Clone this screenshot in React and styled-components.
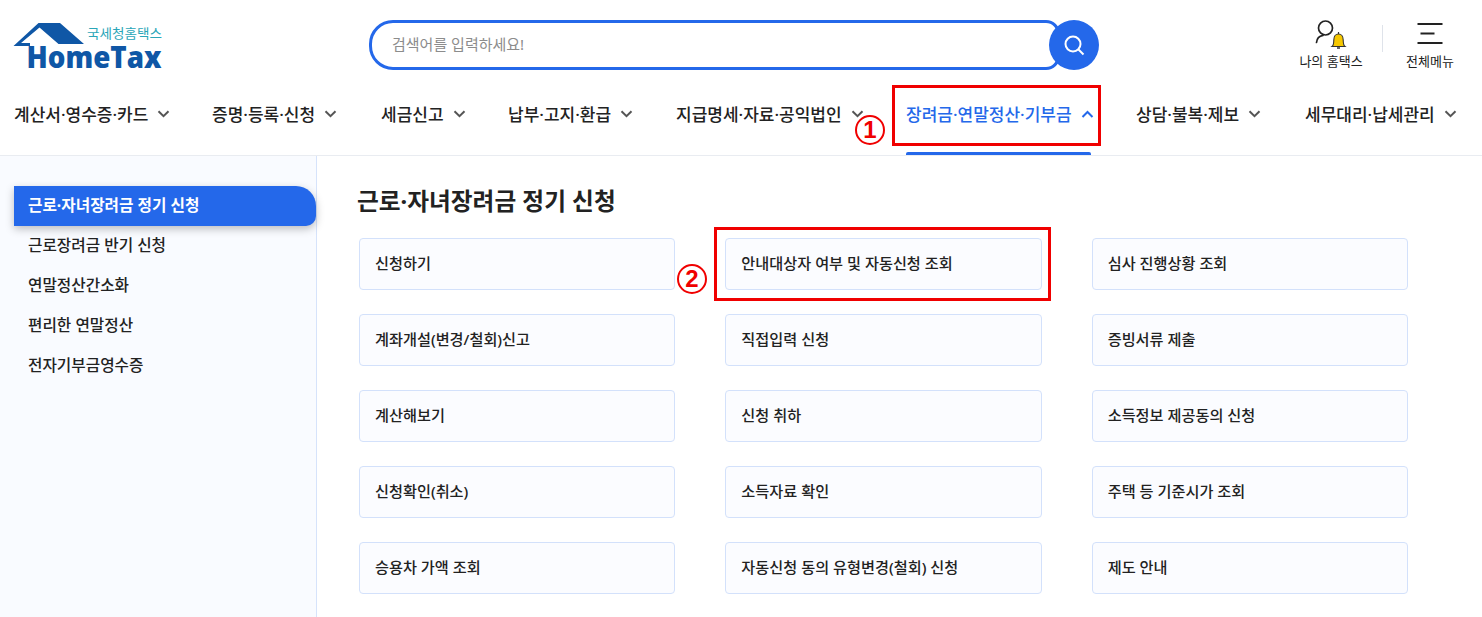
import React from "react";
import styled, { createGlobalStyle } from "styled-components";

const Global = createGlobalStyle`
  html, body { margin: 0; padding: 0; background: #fff; }
  body { font-family: "Noto Sans", "Noto Sans CJK KR", sans-serif; color: #222; }
  * { box-sizing: border-box; }
`;
const Page = styled.div`
  position: relative;
  width: 1482px;
  height: 617px;
  overflow: hidden;
`;
const Header = styled.header`
  height: 156px;
  border-bottom: 1px solid #e9ecf1;
`;
const TopBar = styled.div`
  display: flex;
  align-items: flex-start;
  height: 92px;
  padding: 20px 0 0 14px;
`;
const LogoBox = styled.svg`
  width: 150px;
  height: 52px;
  flex: none;
  overflow: visible;
`;
const SearchWrap = styled.div`
  display: flex;
  margin-left: 205px;
  width: 730px;
  height: 50px;
  flex: none;
`;
const SearchBox = styled.div`
  width: 691px;
  height: 50px;
  border: 3px solid #2468ea;
  border-radius: 24px 14px 14px 24px;
  padding: 0 0 3px 20px;
  display: flex;
  align-items: center;
  font-size: 15px;
  color: #8c8c8c;
`;
const SearchBtn = styled.div`
  width: 50px;
  height: 50px;
  margin-left: -11px;
  border-radius: 50%;
  background: #2468ea;
  display: flex;
  align-items: center;
  justify-content: center;
  flex: none;
`;
const Utils = styled.div`
  display: flex;
  align-items: flex-start;
  margin-left: 199px;
`;
const Util = styled.div`
  display: flex;
  flex-direction: column;
  align-items: center;
  width: ${(p) => p.$w}px;
  font-size: 13px;
  line-height: 16px;
  white-space: nowrap;
  color: #222;
  gap: 4px;
`;
const UtilDivider = styled.div`
  width: 1px;
  height: 27px;
  margin: 5px 22px 0 18px;
  background: #dfe3ea;
`;
const Nav = styled.nav`
  display: flex;
  align-items: center;
  height: 44px;
  padding-left: 14px;
`;
const NavItem = styled.div`
  display: flex;
  align-items: center;
  flex: none;
  width: ${(p) => p.$w}px;
  height: 44px;
  gap: 9px;
  font-size: 17px;
  font-weight: 500;
  color: ${(p) => (p.$active ? "#2468ea" : "#222")};
  white-space: nowrap;
`;
const NavLabel = styled.span`
  position: relative;
  top: -1px;
`;
const Underline = styled.div`
  position: absolute;
  left: 906px;
  top: 152px;
  width: 185px;
  height: 3px;
  background: #2468ea;
  border-radius: 2px 2px 0 0;
`;
const Body = styled.div`
  display: flex;
  height: 461px;
`;
const Side = styled.aside`
  width: 317px;
  flex: none;
  background: #f9fbff;
  border-right: 1px solid #d6e3fb;
  padding: 30px 0 0 14px;
`;
const SideItem = styled.div`
  display: flex;
  align-items: center;
  height: 40px;
  padding: 0 0 3px 14px;
  font-size: 15.7px;
  font-weight: 500;
  color: #222;
  ${(p) =>
    p.$active &&
    `
    background:#2468ea;
    color:#fff;
    border-radius:0 20px 10px 0;
    box-shadow:0 3px 8px rgba(0,0,0,.25);
    font-weight:700;
  `}
`;
const Main = styled.main`
  flex: 1;
  padding: 29px 74px 0 40px;
`;
const Title = styled.h2`
  margin: 0 0 20px;
  font-size: 23.7px;
  line-height: 33px;
  font-weight: 700;
  color: #222;
`;
const Grid = styled.div`
  display: grid;
  grid-template-columns: repeat(3, 316.33px);
  grid-auto-rows: 52px;
  column-gap: 50px;
  row-gap: 24px;
  margin-left: 2px;
`;
const Card = styled.div`
  display: flex;
  align-items: center;
  padding: 0 0 5px 15px;
  background: #fbfcff;
  border: 1px solid #d3e1fb;
  border-radius: 4px;
  font-size: 15.2px;
  font-weight: 500;
  color: #222;
`;
const RedBox = styled.div`
  position: absolute;
  left: ${(p) => p.$x}px;
  top: ${(p) => p.$y}px;
  width: ${(p) => p.$w}px;
  height: ${(p) => p.$h}px;
  border: 3px solid #f00000;
`;
const Marker = styled.div`
  position: absolute;
  left: ${(p) => p.$x}px;
  top: ${(p) => p.$y}px;
  width: 30px;
  height: 30px;
  border: 2.5px solid #f00000;
  border-radius: 50%;
  background: #fff;
  color: #f00000;
  font-family: "Liberation Sans", sans-serif;
  font-size: 24px;
  font-weight: 700;
  display: flex;
  align-items: center;
  justify-content: center;
`;

const Chevron = ({ up, color = "#555" }) => (
  <svg width="13" height="8" viewBox="0 0 13 8" fill="none" style={{ flex: "none" }}>
    <path d={up ? "M1.5 7 6.5 2l5 5" : "M1.5 1.2l5 5 5-5"} stroke={color} strokeWidth="2" />
  </svg>
);

const Logo = () => (
  <LogoBox viewBox="0 0 150 52">
    <path d="M-.500 26 24.500 3H46L70 24H44.500L25.500 7.500 7 23H16V26Z" fill="#0f57a6" />
    <text x="73" y="18" fontFamily="'Noto Sans CJK KR',sans-serif" fontSize="13" fill="#2aa6b8" textLength="75" lengthAdjust="spacingAndGlyphs">국세청홈택스</text>
    <text x="12.500" y="48" fontFamily="'Open Sans',sans-serif" fontWeight="800" fontSize="30" fill="#0f57a6" textLength="135" lengthAdjust="spacingAndGlyphs">HomeTax</text>
  </LogoBox>
);

const nav = [
  ["계산서·영수증·카드", 198],
  ["증명·등록·신청", 169],
  ["세금신고", 127],
  ["납부·고지·환급", 168],
  ["지급명세·자료·공익법인", 230],
  ["장려금·연말정산·기부금", 230, true],
  ["상담·불복·제보", 169],
  ["세무대리·납세관리", 160],
];
const side = ["근로·자녀장려금 정기 신청", "근로장려금 반기 신청", "연말정산간소화", "편리한 연말정산", "전자기부금영수증"];
const cards = [
  "신청하기", "안내대상자 여부 및 자동신청 조회", "심사 진행상황 조회",
  "계좌개설(변경/철회)신고", "직접입력 신청", "증빙서류 제출",
  "계산해보기", "신청 취하", "소득정보 제공동의 신청",
  "신청확인(취소)", "소득자료 확인", "주택 등 기준시가 조회",
  "승용차 가액 조회", "자동신청 동의 유형변경(철회) 신청", "제도 안내",
];

export default function App() {
  return (
    <Page>
      <Global />
      <Header>
        <TopBar>
          <Logo />
          <SearchWrap>
            <SearchBox>검색어를 입력하세요!</SearchBox>
            <SearchBtn>
              <svg width="22" height="22" viewBox="0 0 22 22" fill="none" stroke="#fff" strokeWidth="2">
                <circle cx="10" cy="10" r="7.500" />
                <path d="M15.500 15.500 20.500 20.500" />
              </svg>
            </SearchBtn>
          </SearchWrap>
          <Utils>
            <Util $w={66}>
              <svg width="32" height="29" viewBox="0 0 32 29" fill="none">
                <circle cx="10.500" cy="8" r="7" stroke="#222" strokeWidth="1.700" />
                <path d="M1.500 22.500c.3-3.500 2.800-6.500 6.500-7.200" stroke="#222" strokeWidth="1.700" strokeLinecap="round" />
                <path d="M17 26.500c1.600-1.200 1.800-3 1.800-6.500 0-3.500 1.900-6 4.700-6s4.700 2.500 4.700 6c0 3.500.2 5.300 1.800 6.500z" fill="#f6c800" stroke="#333" strokeWidth="1.100" />
                <path d="M22 28h3" stroke="#333" strokeWidth="1.500" />
                <path d="M23.500 12v2" stroke="#333" strokeWidth="1.200" />
              </svg>
              나의 홈택스
            </Util>
            <UtilDivider />
            <Util $w={50}>
              <svg width="26" height="29" viewBox="0 0 26 29" fill="none" stroke="#222" strokeWidth="2">
                <path d="M.500 4h25M3.500 13.500h14M.500 23h25" />
              </svg>
              전체메뉴
            </Util>
          </Utils>
        </TopBar>
        <Nav>
          {nav.map(([t, w, a]) => (
            <NavItem key={t} $w={w} $active={a}>
              <NavLabel>{t}</NavLabel>
              <Chevron up={a} color={a ? "#2468ea" : "#555"} />
            </NavItem>
          ))}
        </Nav>
      </Header>
      <Underline />
      <Body>
        <Side>
          {side.map((s, i) => (
            <SideItem key={s} $active={i === 0}>{s}</SideItem>
          ))}
        </Side>
        <Main>
          <Title>근로·자녀장려금 정기 신청</Title>
          <Grid>
            {cards.map((c) => <Card key={c}>{c}</Card>)}
          </Grid>
        </Main>
      </Body>
      <RedBox $x={892} $y={85} $w={209} $h={61} />
      <RedBox $x={714} $y={227} $w={337} $h={74} />
      <Marker $x={855} $y={115}>1</Marker>
      <Marker $x={677} $y={264}>2</Marker>
    </Page>
  );
}
